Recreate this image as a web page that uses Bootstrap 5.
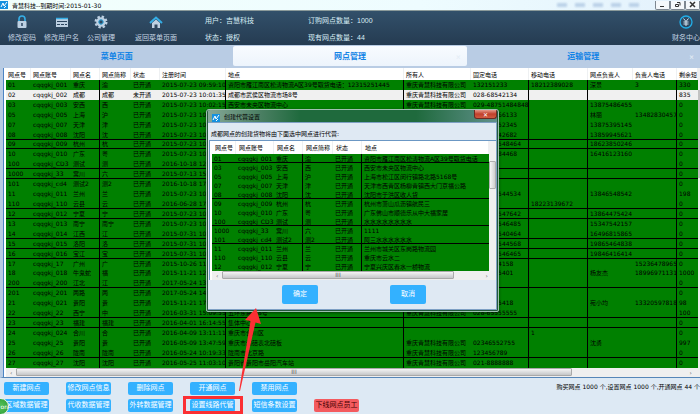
<!DOCTYPE html>
<html lang="zh-CN">
<head>
<meta charset="utf-8">
<meta name="viewport" content="width=device-width, initial-scale=1">
<title>青慧科技</title>
<link href="https://cdn.jsdelivr.net/npm/bootstrap@5.3.0/dist/css/bootstrap.min.css" rel="stylesheet">
<style>
body{font:6px/9px "DejaVu Sans","Noto Sans CJK SC",sans-serif;color:#000;background:#dde9f4;overflow:hidden;min-height:100vh}
button{font:inherit}
.titlebar{background:linear-gradient(90deg,#f2fffc,#eefcff 60%,#e3f1fc);height:10px;color:#000}
.ghost{width:10px;height:4px;background:#a9c3e0;filter:blur(1px);opacity:.7}
.winbtn{width:15px;height:9px;border:1px solid #7d8791;border-top:0;background:#f4f8fb;border-radius:0 0 2px 2px;color:#333}
.topbar{background:linear-gradient(#32506a,#253b51);height:35px;border-top:1px solid #8b9a9a;color:#c3d3e2;font:7px/9px "Liberation Sans","Noto Sans CJK SC",sans-serif}
.tool{background:none;border:0;padding:0;color:inherit;white-space:nowrap}
.tool svg{width:14px;height:14px}
.info{line-height:17px;color:#d9eef6;white-space:nowrap;padding-top:1px}
.info-a{width:107px}
.tabs{background:#b9cce4;padding:1px 0 2px}
.tabs a{height:20px;line-height:21px;font-size:8px;font-weight:600;color:#1283e6;text-decoration:none;position:relative}
.tabs a.on{background:linear-gradient(#f8fbff,#edf4fc);border-radius:2px}
.closer{position:absolute;right:6px;top:0;color:#e4ecf5;font-size:6px}
.frame{border-left:3px solid #b9cce4;border-bottom:1px solid #5686b8;background:#fff}
.frame-in{border-left:1px solid #4c84c4;padding-left:2px}
.grid{table-layout:fixed;width:100%;border-collapse:separate;border-spacing:0;margin:0}
.grid th,.grid td{padding:0 0 0 1px;white-space:nowrap;overflow:hidden;font-weight:400;line-height:8px;vertical-align:middle}
.grid td{background:#008000;color:#000}
.grid tr.sel td{background:#f0f0f0;color:#000}
.grid tr.ln td{box-shadow:inset 0 -1px #000}
.grid .v{border-right:1px solid #000}
.grid th{background:#fff;border-right:1px solid #eef0f2}
.main-grid{height:300px}
.main-grid th{height:12px;padding-left:2px;padding-top:2px}
.main-grid td{padding-left:2px}
.vbar{width:5px;background:#f0f0f0}
.vthumb{height:88px;margin-top:22px;background:linear-gradient(90deg,#fafafa,#d8d8d8);border:1px solid #c2c2c2}
.hbar{height:9px;background:#efefef;color:#555}
.hthumb{height:8px;background:linear-gradient(#f4f4f4,#c4c6c8);border:1px solid #a9a9a9;border-radius:1px;line-height:6px;text-align:center}
.hthumb-main{width:80%}
.actions{padding:4px 0 2px 4px}
.act{background:#33b1ff;border:0;border-radius:2px;color:#fff;width:45px;height:13px;padding:0;line-height:13px;white-space:nowrap;font-size:7px;overflow:hidden}
.act-row{display:grid;grid-template-columns:repeat(6,45px);column-gap:17px}
.act-row + .act-row{margin-top:4px}
.act.warn{background:#f35a5e;color:#400}
.total{white-space:nowrap}
.dlg{position:absolute;left:206px;top:109px;width:293px;border:2px solid #24593c;border-top:0;outline:1px solid #9fc0b0;outline-offset:-1px;background:#dfe9f3;border-radius:3px 3px 2px 2px;box-shadow:0 1px 3px #0008}
.dlg-head{height:13px;background:linear-gradient(90deg,#86a897,#4b7f63 18%,#1f6a3d 32%,#1f6a3d 72%,#60908a);border-radius:2px 2px 0 0;border-top:1px solid #17402a}
.dlg-x{width:23px;height:9px;background:linear-gradient(#e59a8b,#c2402b 50%,#d05a40);border:1px solid #6d2a22;border-top:0;border-radius:0 0 3px 3px;color:#fff;padding:0;line-height:7px;font-weight:700}
.dlg-body{border:1px solid #7ea0c4;border-left:0}
.dlg-text{padding:6px 0 2px 3px}
.dlg-grid th{height:13px;padding-left:3px}
.dlg-grid td{height:9px;padding-left:2px}
.dlg-scroll{border-top:1px solid #6b97c4;border-left:1px solid #6b97c4;margin-left:1px;padding-left:2px;background:#fff}
.dlg-btn{width:36px;height:19px;background:#33b1ff;border:0;border-radius:2px;color:#fff;padding:0;font-size:7px}
.dlg-foot{padding:5px 70px 5px 74px}
.dlg-vthumb{height:28px;margin-top:20px;border:1px solid #b0b0b0;border-radius:1px;background:linear-gradient(90deg,#f6f6f6,#cfcfcf);width:7px}
.mark-box{position:absolute;left:183px;top:396px;width:60px;height:18px;border:3px solid #fb2f33}
.mark-arrow{position:absolute;left:234px;top:306px;width:28px;height:88px}
.ball{position:absolute;left:-8px;top:398px;width:17px;height:17px;border-radius:50%;background:radial-gradient(#57c45a,#2b9a35);border:1px solid #e8f5e8;color:#fff;text-align:right;line-height:15px}
</style>
<script src="https://cdn.jsdelivr.net/npm/bootstrap@5.3.0/dist/js/bootstrap.bundle.min.js"></script>
</head>
<body>
<header class="titlebar d-flex align-items-center">
  <svg width="8" height="8" viewBox="0 0 8 8"><rect width="8" height="8" fill="#1591df"/><path d="M1 6 L3 2 L4 5 L7 1 M4 7 L6 5" stroke="#fff" fill="none"/></svg>
  <span class="ms-1 text-nowrap flex-grow-1">青慧科技--到期时间:2015-01-30</span>
  <div class="d-flex gap-2 me-3"><i class="ghost"></i><i class="ghost"></i><i class="ghost"></i><i class="ghost"></i><i class="ghost"></i></div>
  <button class="winbtn p-0" aria-label="最小化"><svg class="d-block mx-auto" width="7" height="7"><path d="M1 5.500h4" stroke="#333"/></svg></button>
  <button class="winbtn p-0" aria-label="还原"><svg class="d-block mx-auto" width="7" height="7"><path d="M1.500 3.500h3v2h-3zM3 1.500h3v3" stroke="#333" fill="none"/></svg></button>
  <button class="winbtn p-0" aria-label="关闭"><svg class="d-block mx-auto" width="7" height="7"><path d="M1 1l5 5M6 1l-5 5" stroke="#333" stroke-width="1.500"/></svg></button>
</header>

<nav class="topbar d-flex">
  <div class="d-flex align-items-start pt-1 ps-1">
    <button class="tool ms-1"><svg class="d-block mx-auto mb-1" viewBox="0 0 14 14"><path d="M4 7V4a3 3 0 0 1 6 0v3" fill="none" stroke="#35aee6" stroke-width="1.600"/><rect x="2.500" y="6" width="9" height="7" rx="1" fill="#bdd0e2"/><path d="M7 8v3" stroke="#2c4660" stroke-width="1.500"/></svg>修改密码</button>
    <button class="tool ms-2"><svg class="d-block mx-auto mb-1" viewBox="0 0 14 14"><rect x="1" y="3" width="12" height="9" fill="#bdd0e2"/><path d="M1 3.500h12" stroke="#35aee6" stroke-width="1.500"/><path d="M2 6.500h10M2 9.500h3M6 9.500h3M10 9.500h2" stroke="#2c4660"/></svg>修改用户名</button>
    <button class="tool ms-2"><svg class="d-block mx-auto mb-1" viewBox="0 0 14 14"><circle cx="7" cy="7" r="5" fill="none" stroke="#bdd0e2" stroke-width="3" stroke-dasharray="2.200 1.727"/><circle cx="7" cy="7" r="3.600" fill="none" stroke="#bdd0e2" stroke-width="2.400"/><circle cx="7" cy="7" r="2.200" fill="none" stroke="#35aee6"/></svg>公司管理</button>
    <button class="tool ms-3 ps-1"><svg class="d-block mx-auto mb-1" viewBox="0 0 14 14"><path d="M3 8l4-3.500L11 8v5H8.500V9.500h-3V13H3z" fill="#bdd0e2"/><path d="M1 8l6-5.500L13 8" fill="none" stroke="#35aee6" stroke-width="2"/></svg>返回菜单页面</button>
  </div>
  <div class="info info-a ms-4 ps-1">用户：吉慧科技<br>状态：授权</div>
  <div class="info">订购网点数量：1000<br>现有网点数量：44</div>
  <button class="tool ms-auto align-self-start pt-1"><svg class="d-block mx-auto mb-1" viewBox="0 0 14 14"><circle cx="7" cy="7" r="6" fill="none" stroke="#22aee8" stroke-width="1.300"/><path d="M4.500 3.500L7 6.500l2.500-3M7 6.500V11M4.500 7h5M4.500 9h5" fill="none" stroke="#d5e4f0"/></svg>财务中心</button>
</nav>

<div class="tabs d-flex text-center">
  <a class="flex-fill w-100" href="#">菜单页面</a>
  <a class="flex-fill w-100 on" href="#">网点管理<span class="closer">×</span></a>
  <a class="flex-fill w-100" href="#">运输管理<span class="closer">×</span></a>
</div>

<main class="frame"><div class="frame-in">
  <div class="d-flex">
    <div class="flex-grow-1 overflow-hidden">
      <table class="grid main-grid">
        <colgroup><col style="width:25px"><col style="width:40px"><col style="width:29px"><col style="width:31px"><col style="width:29px"><col style="width:66px"><col><col style="width:67px"><col style="width:58px"><col style="width:59px"><col style="width:45px"><col style="width:44px"><col style="width:21px"></colgroup>
        <thead><tr><th>网点号</th><th>网点账号</th><th>网点名</th><th>网点简称</th><th>状态</th><th>注册时间</th><th>地点</th><th>所有人</th><th>固定电话</th><th>移动电话</th><th>网点负责人</th><th>负责人电话</th><th>剩余短</th></tr></thead>
        <tbody id="sites"></tbody>
      </table>
    </div>
    <div class="vbar"><div class="vthumb"></div></div>
  </div>
  <div class="hbar d-flex"><span class="px-1">‹</span><div class="hthumb hthumb-main me-auto">III</div><span class="px-2">›</span></div>
</div></main>

<footer class="actions d-flex justify-content-between">
  <div>
    <div class="act-row"><button class="act">新建网点</button><button class="act">修改网点信息</button><button class="act">删除网点</button><button class="act">开通网点</button><button class="act">禁用网点</button></div>
    <div class="act-row"><button class="act">区域数据管理</button><button class="act">代收数据管理</button><button class="act">外转数据管理</button><button class="act">设置线路代管</button><button class="act">短信条数设置</button><button class="act warn">下线网点员工</button></div>
  </div>
  <div class="total">购买网点 1000 个,设置网点 1000 个,开通网点 44 个</div>
</footer>

<section class="dlg" role="dialog" aria-label="创建代营设置">
  <div class="dlg-head d-flex">
    <svg class="mt-1 ms-1" width="8" height="8" viewBox="0 0 8 8"><rect width="8" height="8" fill="#1591df"/><path d="M1 6 L3 2 L4 5 L7 1 M4 7 L6 5" stroke="#fff" fill="none"/></svg>
    <span class="ms-1 pt-1 lh-1 flex-grow-1">创建代营设置</span>
    <button class="dlg-x" aria-label="关闭">✕</button>
  </div>
  <div class="dlg-body">
    <div class="dlg-text">成都网点的创建货物将由下面选中网点进行代营:</div>
    <div class="dlg-scroll">
      <div class="d-flex">
        <div class="flex-grow-1 overflow-hidden">
          <table class="grid dlg-grid">
            <colgroup><col style="width:24px"><col style="width:38px"><col style="width:29px"><col style="width:30px"><col style="width:29px"><col></colgroup>
            <thead><tr><th>网点号</th><th>网点账号</th><th>网点名</th><th>网点简称</th><th>状态</th><th>地点</th></tr></thead>
            <tbody id="choices"></tbody>
          </table>
        </div>
        <div class="vbar w-auto"><div class="dlg-vthumb"></div></div>
      </div>
      <div class="hbar d-flex"><span class="px-1">‹</span><div class="hthumb flex-grow-1 me-4">III</div><span class="px-2">›</span></div>
    </div>
    <div class="dlg-foot d-flex justify-content-between"><button class="dlg-btn">确定</button><button class="dlg-btn">取消</button></div>
  </div>
</section>

<div class="mark-box"></div>
<svg class="mark-arrow" viewBox="0 0 28 88"><path d="M5 85L16.500 15L11 14L22 2L27 18L21.500 16.500L6 85z" fill="#fb2f33"/></svg>
<div class="ball">on</div>

<script>
const co = '重庆青慧科技有限公司';
const sites = [
 ['01','cqqgkj_001','重庆','渝','已开通','2015-07-23 09:59:10','资阳市雁江南区松涛物流A区39号取货电话：12315251445',co,'132151233','18212389028','深景','3','330'],
 ['02','cqqgkj_002','成都','成都','未开通','2015-07-23 10:01:35','成都市武侯区物流市场8号',co,'028-68542134','','','','835'],
 ['03','cqqgkj_003','安西','西','已开通','2015-07-23 10:02:15','西安市未央区物流中心',co,'029-48751484848','','13875486455','','0'],
 ['05','cqqgkj_005','上海','沪','已开通','2015-07-23 10:03:35','',"",'021-85466133','','林丽','13482830457','0'],
 ['07','cqqgkj_007','天津','津','已开通','2015-07-23 10:05:12','',"",'022-46852345','','13875395145','','0'],
 ['08','cqqgkj_008','沈阳','沈','已开通','2015-07-23 10:06:44','',"",'024-68542682','','13859945621','','0'],
 ['09','cqqgkj_009','杭州','杭','已开通','2015-07-23 10:08:21','',"",'0571-68548464','','18623850246','','0'],
 ['10','cqqgkj_010','广东','粤','已开通','2015-07-23 10:10:15','',"",'020-65484468','','16416123160','','0'],
 ['100','cqqgkj_CD3','测试','测','已开通','2016-10-18 12:10:18','',"",'','','','','0'],
 ['1000','cqqgkj_33','寓川','六','已开通','2015-07-13 15:12:11','',"",'','','','','0'],
 ['101','cqqgkj_cd4','测试2','测2','已开通','2016-10-18 17:11:42','',"",'','','','','0'],
 ['11','cqqgkj_011','兰州','兰','已开通','2015-07-23 10:13:34','',"",'0931-68544534','','13846548542','','198'],
 ['110','cqqgkj_110','云县','云','已开通','2016-06-28 17:10:22','',"",'','18223139672','','','0'],
 ['12','cqqgkj_012','宁夏','宁','已开通','2015-07-23 10:14:54','',"",'0951-68547642','','13864475424','','0'],
 ['13','cqqgkj_013','南宁','南宁','已开通','2015-07-23 10:16:33','',"",'0771-68546485','','15347542157','','0'],
 ['14','cqqgkj_014','江西','江','已开通','2015-07-31 10:17:22','',"",'0791-68540464','','16496815865','','0'],
 ['15','cqqgkj_015','洛阳','洛','已开通','2015-07-31 10:18:20','',"",'0379-68544568','','19865464838','','0'],
 ['16','cqqgkj_016','宝江','宝','已开通','2015-07-31 10:19:51','',"",'0917-68546465','','19846416414','','0'],
 ['17','cqqgkj_17','广州','广','已开通','2015-10-26 11:13:12','',"",'020-6854158','','','15236478965','0'],
 ['18','cqqgkj_018','牛鬼蛇','福','已开通','2015-11-21 12:24:14','',"",'0591-685401','','杨友杰','18996971131','1000'],
 ['200','cqqgkj_200','江北','江','已开通','2017-05-24 13:42:15','',"",'','','','','0'],
 ['201','cqqgkj_201','两路','两','已开通','2017-05-24 14:11:18','',"",'','','','','0'],
 ['21','cqqgkj_021','贵阳','贵','已开通','2015-11-21 17:12:32','',"",'0851-685418','','宛小均','13320597818','98'],
 ['22','cqqgkj_22','西宁','中','已开通','2016-03-31 15:09:55','五环东路南8号',co,'028-65555555','','','','100'],
 ['23','cqqgkj_23','福建','福建','已开通','2016-04-01 16:14:55','集体中心','','','','','','0'],
 ['24','cqqgkj_024','合川','合','已开通','2016-04-09 13:11:11','重庆市合川区','','','1','','','0'],
 ['25','cqqgkj_25','贵阳','贵','已开通','2016-05-09 13:47:59','重庆市渝碚表北碚板',co,'02346552755','','沈勇','','997'],
 ['26','cqqgkj_26','陇南','陇南','已开通','2016-05-24 10:19:33','陇南市北京路',co,'123456789','','','','0'],
 ['27','cqqgkj_27','沈阳','沈阳','已开通','2016-05-25 11:03:10','贵阳省贵阳市岳阳汽车站',co,'021-8888888','','','','0']
];
const places = {'01':'资阳市雁江南区松涛物流A区39号取货电话','03':'西安市未央区物流中心','05':'上海市松江区闵行镇路北路5168号','07':'天津市西青区杨柳青镇西大门京福公路','08':'沈阳市于洪区收人货','09':'杭州市萧山瓜沥镇航民三','10':'广东佛山市顺德乐从中大福家居','100':'水水水水水水水水','1000':'1111','101':'阿三水水水水水水','11':'兰州市城关区东岗路物流园','110':'重庆市云水二','12':'宁夏兴庆区春水一桥物流'};
const row = (cells, cls, v) => `<tr class="${cls}">` + cells.map((c, i) => `<td class="${v.includes(i) ? 'v' : ''}">${c}</td>`).join('') + '</tr>';
const ruled = ['08','09','100','1000','110','12','14','15','16','200','22','23','26'];
document.getElementById('sites').innerHTML = sites.map(s => row(s, s[0] === '02' ? 'sel' : ruled.includes(s[0]) ? 'ln' : '', [2,5,6,8,9,11])).join('');
document.getElementById('choices').innerHTML = sites.filter(s => places[s[0]]).map(s => row([...s.slice(0, 5), places[s[0]]], ['01','08','100','101'].includes(s[0]) ? 'ln' : '', [2,4])).join('');
</script>
</body>
</html>
